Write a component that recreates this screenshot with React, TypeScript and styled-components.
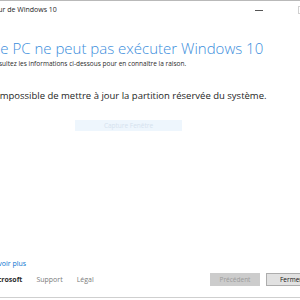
import styled, { createGlobalStyle } from "styled-components";

const GlobalStyle = createGlobalStyle`
  html, body {
    margin: 0;
    padding: 0;
    background: #ffffff;
  }
  body {
    width: 300px;
    height: 300px;
    overflow: hidden;
    font-family: "Open Sans", "Noto Sans", sans-serif;
  }
`;

const Viewport = styled.div`
  width: 300px;
  height: 300px;
  overflow: hidden;
`;

const Window = styled.div`
  width: 386px;
  height: 298px;
  margin-left: -20px;
  box-sizing: border-box;
  border-top: 1px solid #b9b9b9;
  border-bottom: 1px solid #cfcfcf;
  display: flex;
  flex-direction: column;
`;

const TitleBar = styled.div`
  height: 17px;
  display: flex;
  align-items: center;
`;

const Title = styled.span`
  flex: 1;
  margin-left: -52px;
  font-size: 7px;
  color: #1e1e1e;
  white-space: nowrap;
`;

const CaptionButton = styled.div`
  width: 43px;
  height: 17px;
  display: flex;
  align-items: center;
  justify-content: center;
`;

const Main = styled.div`
  padding: 20px 0 0 11px;
  display: flex;
  flex-direction: column;
`;

const Headline = styled.h1`
  margin: 0;
  font-size: 15px;
  line-height: 20px;
  font-weight: 300;
  color: #3a8ddc;
  white-space: nowrap;
`;

const Subtitle = styled.p`
  margin: 1px 0 0 -4px;
  font-size: 6.5px;
  line-height: 9px;
  color: #2a2a2a;
  white-space: nowrap;
`;

const Reason = styled.p`
  margin: 21px 0 0 6px;
  font-size: 9.5px;
  line-height: 13px;
  color: #1e1e1e;
  white-space: nowrap;
`;

const Watermark = styled.div`
  margin: 18px 0 0 84px;
  width: 107px;
  height: 11px;
  background: #eef6fd;
  color: #d5e2ee;
  font-size: 6.5px;
  display: flex;
  align-items: center;
  justify-content: center;
`;

const Spacer = styled.div`
  flex: 1;
`;

const LearnMore = styled.a`
  padding-left: 1px;
  font-size: 7px;
  line-height: 10px;
  color: #0a74d0;
  text-decoration: none;
`;

const Footer = styled.div`
  display: flex;
  align-items: center;
  justify-content: space-between;
  padding: 4px 50px 11px 9px;
`;

const Links = styled.div`
  display: flex;
  align-items: center;
  gap: 14px;
`;

const FooterLink = styled.span<{ $brand?: boolean }>`
  font-size: 7px;
  font-weight: ${(p) => (p.$brand ? 700 : 400)};
  color: ${(p) => (p.$brand ? "#2b2b2b" : "#7a7a7a")};
`;

const Buttons = styled.div`
  display: flex;
  gap: 6px;
`;

const Button = styled.button<{ $disabled?: boolean }>`
  width: 50px;
  height: 13px;
  padding: 0;
  box-sizing: border-box;
  font-family: inherit;
  font-size: 6.5px;
  border: 1px solid ${(p) => (p.$disabled ? "#cccccc" : "#adadad")};
  background: ${(p) => (p.$disabled ? "#cccccc" : "#e1e1e1")};
  color: ${(p) => (p.$disabled ? "#9b9b9b" : "#111111")};
`;

export default function App() {
  return (
    <Viewport>
      <GlobalStyle />
      <Window>
        <TitleBar>
          <Title>Assistant de mise à jour de Windows 10</Title>
          <CaptionButton>
            <svg width="8" height="8" viewBox="0 0 8 8">
              <line x1="0" y1="4.5" x2="8" y2="4.5" stroke="#555" strokeWidth="1" />
            </svg>
          </CaptionButton>
          <CaptionButton>
            <svg width="8" height="8" viewBox="0 0 8 8">
              <rect x="0.5" y="0.5" width="7" height="7" fill="none" stroke="#d0d0d0" strokeWidth="1" />
            </svg>
          </CaptionButton>
          <CaptionButton>
            <svg width="8" height="8" viewBox="0 0 8 8">
              <path d="M0.5 0.5 L7.5 7.5 M7.5 0.5 L0.5 7.5" stroke="#555" strokeWidth="1" />
            </svg>
          </CaptionButton>
        </TitleBar>
        <Main>
          <Headline>Ce PC ne peut pas exécuter Windows 10</Headline>
          <Subtitle>Consultez les informations ci-dessous pour en connaître la raison.</Subtitle>
          <Reason>Impossible de mettre à jour la partition réservée du système.</Reason>
          <Watermark>Capture Fenêtre</Watermark>
        </Main>
        <Spacer />
        <LearnMore href="#">En savoir plus</LearnMore>
        <Footer>
          <Links>
            <FooterLink $brand>Microsoft</FooterLink>
            <FooterLink>Support</FooterLink>
            <FooterLink>Légal</FooterLink>
          </Links>
          <Buttons>
            <Button $disabled>Précédent</Button>
            <Button>Fermer</Button>
          </Buttons>
        </Footer>
      </Window>
    </Viewport>
  );
}
